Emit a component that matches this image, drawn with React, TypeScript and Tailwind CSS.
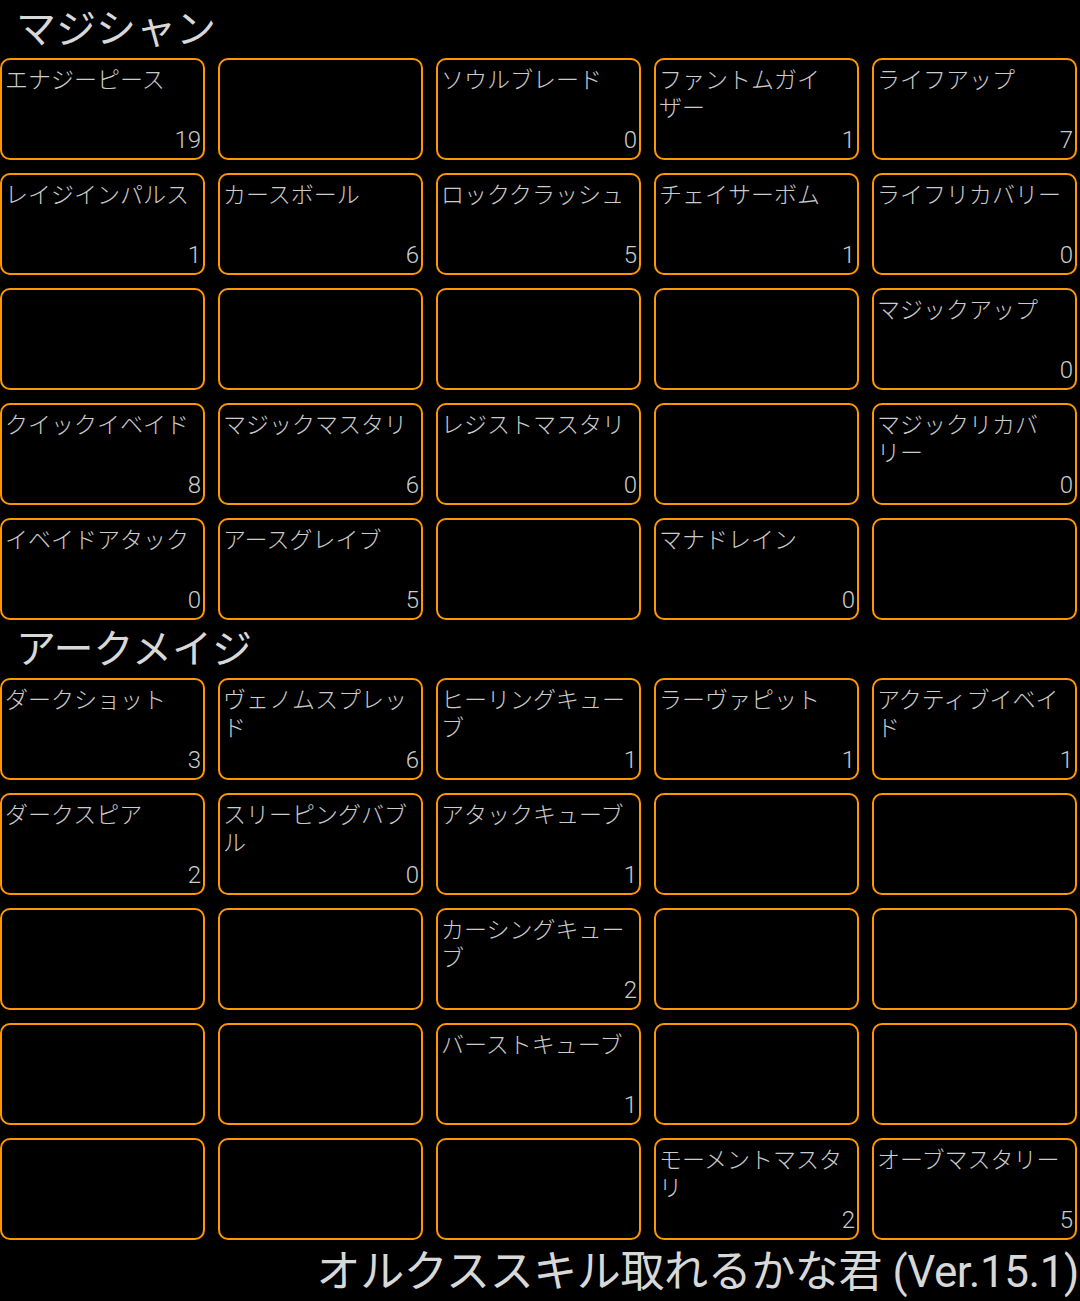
import React from "react";

type Cell = { name: string; n: number } | null;

const magician: Cell[] = [
  { name: "エナジーピース", n: 19 },
  null,
  { name: "ソウルブレード", n: 0 },
  { name: "ファントムガイ\nザー", n: 1 },
  { name: "ライフアップ", n: 7 },
  { name: "レイジインパルス", n: 1 },
  { name: "カースボール", n: 6 },
  { name: "ロッククラッシュ", n: 5 },
  { name: "チェイサーボム", n: 1 },
  { name: "ライフリカバリー", n: 0 },
  null,
  null,
  null,
  null,
  { name: "マジックアップ", n: 0 },
  { name: "クイックイベイド", n: 8 },
  { name: "マジックマスタリ", n: 6 },
  { name: "レジストマスタリ", n: 0 },
  null,
  { name: "マジックリカバ\nリー", n: 0 },
  { name: "イベイドアタック", n: 0 },
  { name: "アースグレイブ", n: 5 },
  null,
  { name: "マナドレイン", n: 0 },
  null,
];

const archmage: Cell[] = [
  { name: "ダークショット", n: 3 },
  { name: "ヴェノムスプレッ\nド", n: 6 },
  { name: "ヒーリングキュー\nブ", n: 1 },
  { name: "ラーヴァピット", n: 1 },
  { name: "アクティブイベイ\nド", n: 1 },
  { name: "ダークスピア", n: 2 },
  { name: "スリーピングバブ\nル", n: 0 },
  { name: "アタックキューブ", n: 1 },
  null,
  null,
  null,
  null,
  { name: "カーシングキュー\nブ", n: 2 },
  null,
  null,
  null,
  null,
  { name: "バーストキューブ", n: 1 },
  null,
  null,
  null,
  null,
  null,
  { name: "モーメントマスタ\nリ", n: 2 },
  { name: "オーブマスタリー", n: 5 },
];

function SkillCell({ cell }: { cell: Cell }) {
  return (
    <div className="h-[102px] rounded-[10px] border-2 border-[#ff9800] flex flex-col justify-between pl-[3px] pr-[2px] pt-[7px] pb-[4px]">
      {cell ? (
        <>
          <div className="text-[23px] leading-[28px] font-light text-[#cccccc] whitespace-pre-line">
            {cell.name}
          </div>
          <div className="text-right text-[24px] leading-[28px] font-light text-[#cccccc]">
            {cell.n}
          </div>
        </>
      ) : null}
    </div>
  );
}

function Section({ title, cells }: { title: string; cells: Cell[] }) {
  return (
    <div>
      <div className="h-[58px] pl-[16px] text-[40px] leading-[60px] font-normal text-[#d8d8d8]">
        {title}
      </div>
      <div className="grid grid-cols-5 gap-[13px] pr-[3px]">
        {cells.map((c, i) => (
          <SkillCell key={i} cell={c} />
        ))}
      </div>
    </div>
  );
}

export default function App() {
  return (
    <div
      className="w-[1080px] h-[1301px] bg-black overflow-hidden"
      style={{ fontFamily: 'Roboto, "Noto Sans CJK JP", sans-serif' }}
    >
      <Section title="マジシャン" cells={magician} />
      <Section title="アークメイジ" cells={archmage} />
      <div className="h-[61px] text-right pr-[1px] text-[44px] tracking-[-0.4px] leading-[64px] font-normal text-[#d8d8d8] whitespace-nowrap">
        オルクススキル取れるかな君 (Ver.15.1)
      </div>
    </div>
  );
}
